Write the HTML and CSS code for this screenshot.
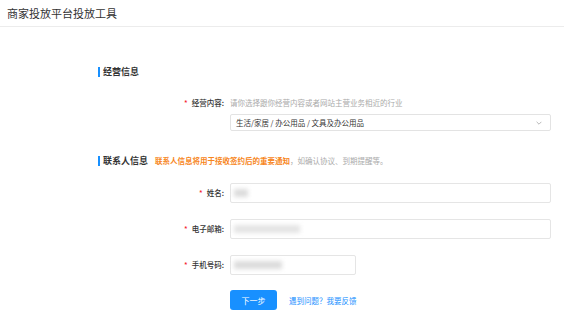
FILE: index.html
```html
<!DOCTYPE html>
<html lang="zh-CN">
<head>
    <meta charset="UTF-8">
    <meta name="viewport" content="width=device-width, initial-scale=1.0">
    <title>商家投放平台投放工具</title>
    <link rel="stylesheet" href="styles.css">
</head>
<body>
    <header class="topbar">商家投放平台投放工具</header>

    <main class="form">
        <section class="group">
            <h3 class="group-title">经营信息</h3>
            <div class="row row-top">
                <label class="label required">经营内容:</label>
                <div class="field">
                    <div class="hint">请你选择跟你经营内容或者网站主营业务相近的行业</div>
                    <div class="select">
                        <span>生活/家居 / 办公用品 / 文具及办公用品</span>
                        <svg class="chevron" viewBox="0 0 10 6" width="6" height="4">
                            <path d="M1 1 L5 5 L9 1" fill="none" stroke="#aaa" stroke-width="1.4"/>
                        </svg>
                    </div>
                </div>
            </div>
        </section>

        <section class="group group-contact">
            <h3 class="group-title">联系人信息
                <span class="notice"><em>联系人信息将用于接收签约后的重要通知</em>，如确认协议、到期提醒等。</span>
            </h3>
            <div class="row">
                <label class="label required">姓名:</label>
                <div class="field">
                    <div class="input"><span class="blur blur-name"></span></div>
                </div>
            </div>
            <div class="row">
                <label class="label required">电子邮箱:</label>
                <div class="field">
                    <div class="input"><span class="blur blur-mail"></span></div>
                </div>
            </div>
            <div class="row">
                <label class="label required">手机号码:</label>
                <div class="field">
                    <div class="input input-short"><span class="blur blur-phone"></span></div>
                </div>
            </div>
            <div class="row actions">
                <div class="label"></div>
                <div class="field">
                    <button class="btn-primary">下一步</button>
                    <a class="feedback" href="#">遇到问题？我要反馈</a>
                </div>
            </div>
        </section>
    </main>
</body>
</html>
```

FILE: styles.css
```css
body {
    margin: 0;
    font-family: "Noto Sans CJK SC", "Noto Sans", sans-serif;
    color: #333;
    background: #fff;
}
.topbar {
    height: 27px;
    line-height: 26px;
    padding-left: 7px;
    font-size: 11px;
    color: #333;
    border-bottom: 1px solid #ececec;
    box-sizing: border-box;
}
.form {
    padding: 40px 13px 0 98px;
}
.group-title {
    margin: 0;
    height: 10px;
    line-height: 10px;
    font-size: 9px;
    font-weight: bold;
    color: #333;
    border-left: 2px solid #1890ff;
    padding-left: 3px;
    display: flex;
    align-items: center;
}
.group-contact {
    margin-top: 25px;
}
.notice {
    margin-left: 7px;
    font-size: 7.5px;
    font-weight: normal;
    color: #aaa;
}
.notice em {
    font-style: normal;
    font-weight: bold;
    color: #f7861c;
}
.row {
    display: flex;
    align-items: center;
    margin-top: 16px;
}
.row-top {
    align-items: flex-start;
    margin-top: 21px;
}
.group-contact .row:first-of-type {
    margin-top: 17px;
}
.label {
    width: 132px;
    flex: none;
    text-align: right;
    font-size: 7.5px;
    font-weight: 500;
    line-height: 10px;
    color: #333;
    padding-right: 6px;
    box-sizing: border-box;
}
.label.required::before {
    content: "*";
    color: #f5222d;
    margin-right: 4px;
}
.field {
    flex: 1;
}
.hint {
    font-size: 7.5px;
    line-height: 10px;
    color: #aaa;
}
.select {
    margin-top: 6px;
    height: 17px;
    border: 1px solid #e3e3e3;
    border-radius: 2px;
    box-sizing: border-box;
    display: flex;
    align-items: center;
    justify-content: space-between;
    padding: 0 8px 0 5px;
    font-size: 7.5px;
    color: #333;
}
.input {
    height: 20px;
    border: 1px solid #e5e5e5;
    border-radius: 2px;
    box-sizing: border-box;
    display: flex;
    align-items: center;
    padding-left: 3px;
}
.input-short {
    width: 126px;
}
.blur {
    display: block;
    height: 8px;
    background: #dcdcdc;
    filter: blur(2px);
}
.blur-name {
    width: 14px;
}
.blur-mail {
    width: 66px;
    background: #e4e4e4;
}
.blur-phone {
    width: 48px;
}
.actions {
    margin-top: 15px;
}
.actions .field {
    display: flex;
    align-items: center;
}
.btn-primary {
    width: 47px;
    height: 20px;
    border: none;
    border-radius: 3px;
    background: #1890ff;
    color: #fff;
    font-family: inherit;
    font-size: 8px;
    padding: 0;
    cursor: pointer;
}
.feedback {
    margin-left: 12px;
    font-size: 7.5px;
    color: #1890ff;
    text-decoration: none;
}
```
